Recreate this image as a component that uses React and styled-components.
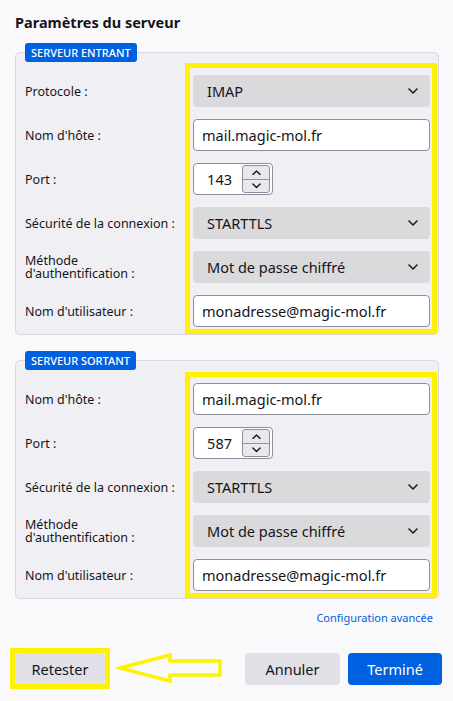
import React from "react";
import styled, { createGlobalStyle } from "styled-components";

const Global = createGlobalStyle`
  html, body { margin: 0; padding: 0; background: #f9f9fb; }
  body { font-family: "Noto Sans", "Open Sans", sans-serif; color: #15141a; }
  * { box-sizing: border-box; }
`;

const Page = styled.div`
  width: 453px;
  height: 701px;
  padding: 11px 14px 0 15px;
  display: flex;
  flex-direction: column;
`;

const Title = styled.h2`
  margin: 0 0 10px 0;
  font-size: 14.5px;
  line-height: 22px;
  font-weight: 700;
`;

const Fieldset = styled.fieldset`
  margin: ${(p) => p.$mt || 0}px 0 0 0;
  padding: ${(p) => p.$pt}px 1px ${(p) => p.$pb}px 9px;
  border: 1px solid #d8d8de;
  border-radius: 5px;
  background: #f0f0f4;
  min-width: 0;
`;

const Legend = styled.legend`
  padding: 0 6px;
  height: 19px;
  line-height: 19px;
  background: #0061e0;
  color: #fff;
  border-radius: 3px;
  font-size: 11px;
  font-weight: 500;
`;

const Body = styled.div`
  display: flex;
`;

const LabelCol = styled.div`
  width: 160px;
  padding-top: ${(p) => p.$pt}px;
  display: flex;
  flex-direction: column;
  gap: 12px;
`;

const Label = styled.div`
  height: 32px;
  display: flex;
  align-items: center;
  font-size: 12.5px;
  line-height: 13px;
  color: #15141a;
  max-width: 150px;
`;

const Highlight = styled.div`
  flex: 1;
  border: 5px solid #fff200;
  padding: ${(p) => p.$pt}px 2px ${(p) => p.$pb}px 3px;
  display: flex;
  flex-direction: column;
  gap: 12px;
`;

const Select = styled.div`
  height: 32px;
  border-radius: 4px;
  background: #dadadd;
  display: flex;
  align-items: center;
  justify-content: space-between;
  padding: 0 12px 0 14px;
  font-size: 14.5px;
`;

const Input = styled.div`
  height: 32px;
  border-radius: 4px;
  background: #fff;
  border: 1px solid #8f8f9d;
  display: flex;
  align-items: center;
  padding: 0 8px;
  font-size: 14.5px;
`;

const PortBox = styled(Input)`
  width: 80px;
  padding: 0 2px 0 0;
  justify-content: space-between;
`;

const PortValue = styled.span`
  flex: 1;
  text-align: right;
  padding-right: 10px;
`;

const Spinner = styled.div`
  width: 28px;
  height: 28px;
  border: 1px solid #8f8f9d;
  border-radius: 3px;
  background: #e9e9ed;
  display: flex;
  flex-direction: column;
  overflow: hidden;
`;

const SpinHalf = styled.div`
  flex: 1;
  display: flex;
  align-items: center;
  justify-content: center;
  & + & { border-top: 1px solid #8f8f9d; }
`;

const Advanced = styled.div`
  text-align: right;
  padding: 11px 6px 0 0;
  font-size: 11px;
  line-height: 16px;
  color: #0061e0;
`;

const Footer = styled.div`
  margin-top: 22px;
  display: flex;
  align-items: center;
  justify-content: space-between;
  margin-left: -5px;
  margin-right: -3px;
`;

const Group = styled.div`
  display: flex;
  align-items: center;
  gap: ${(p) => p.$gap || 0}px;
`;

const YellowFrame = styled.div`
  border: 5px solid #fff200;
  display: flex;
`;

const Button = styled.button`
  width: ${(p) => p.$w}px;
  height: ${(p) => p.$h || 32}px;
  border: none;
  border-radius: 4px;
  font-family: inherit;
  font-size: 14.5px;
  background: ${(p) => (p.$primary ? "#0061e0" : "#e0e0e6")};
  color: ${(p) => (p.$primary ? "#fff" : "#15141a")};
  padding: 0;
`;

const Chevron = ({ up, size = 10 }) => (
  <svg width={size} height={size / 2 + 1} viewBox="0 0 10 6">
    <path
      d={up ? "M1 5 L5 1 L9 5" : "M1 1 L5 5 L9 1"}
      fill="none"
      stroke="#15141a"
      strokeWidth="1.5"
      strokeLinecap="round"
      strokeLinejoin="round"
    />
  </svg>
);

const Field = ({ f }) => {
  if (f.type === "select")
    return (
      <Select>
        <span>{f.value}</span>
        <Chevron />
      </Select>
    );
  if (f.type === "port")
    return (
      <PortBox>
        <PortValue>{f.value}</PortValue>
        <Spinner>
          <SpinHalf>
            <Chevron up size={9} />
          </SpinHalf>
          <SpinHalf>
            <Chevron size={9} />
          </SpinHalf>
        </Spinner>
      </PortBox>
    );
  return <Input>{f.value}</Input>;
};

const Section = ({ legend, rows, mt, fpt, fpb, hpt, hpb }) => (
  <Fieldset $mt={mt} $pt={fpt} $pb={fpb}>
    <Legend>{legend}</Legend>
    <Body>
      <LabelCol $pt={5 + hpt}>
        {rows.map((r) => (
          <Label key={r.label}>{r.label}</Label>
        ))}
      </LabelCol>
      <Highlight $pt={hpt} $pb={hpb}>
        {rows.map((r) => (
          <Field key={r.label} f={r} />
        ))}
      </Highlight>
    </Body>
  </Fieldset>
);

const incoming = [
  { label: "Protocole :", type: "select", value: "IMAP" },
  { label: "Nom d'hôte :", type: "input", value: "mail.magic-mol.fr" },
  { label: "Port :", type: "port", value: "143" },
  { label: "Sécurité de la connexion :", type: "select", value: "STARTTLS" },
  { label: "Méthode d'authentification :", type: "select", value: "Mot de passe chiffré" },
  { label: "Nom d'utilisateur :", type: "input", value: "monadresse@magic-mol.fr" },
];

const outgoing = [
  { label: "Nom d'hôte :", type: "input", value: "mail.magic-mol.fr" },
  { label: "Port :", type: "port", value: "587" },
  { label: "Sécurité de la connexion :", type: "select", value: "STARTTLS" },
  { label: "Méthode d'authentification :", type: "select", value: "Mot de passe chiffré" },
  { label: "Nom d'utilisateur :", type: "input", value: "monadresse@magic-mol.fr" },
];

const Arrow = () => (
  <svg width="110" height="32" viewBox="0 0 110 32">
    <polygon
      points="4,15 54,2 54,8 104,8 104,22 54,22 54,28"
      fill="none"
      stroke="#fff200"
      strokeWidth="3.5"
      strokeLinejoin="miter"
    />
  </svg>
);

export default function App() {
  return (
    <>
      <Global />
      <Page>
        <Title>Paramètres du serveur</Title>
        <Section legend="SERVEUR ENTRANT" rows={incoming} fpt={1} fpb={0} hpt={7} hpb={2} />
        <Section legend="SERVEUR SORTANT" rows={outgoing} mt={16} fpt={2} fpb={0} hpt={6} hpb={2} />
        <Advanced>Configuration avancée</Advanced>
        <Footer>
          <Group $gap={6}>
            <YellowFrame>
              <Button $w={90} $h={31}>Retester</Button>
            </YellowFrame>
            <Arrow />
          </Group>
          <Group $gap={8}>
            <Button $w={95}>Annuler</Button>
            <Button $w={94} $primary>Terminé</Button>
          </Group>
        </Footer>
      </Page>
    </>
  );
}
